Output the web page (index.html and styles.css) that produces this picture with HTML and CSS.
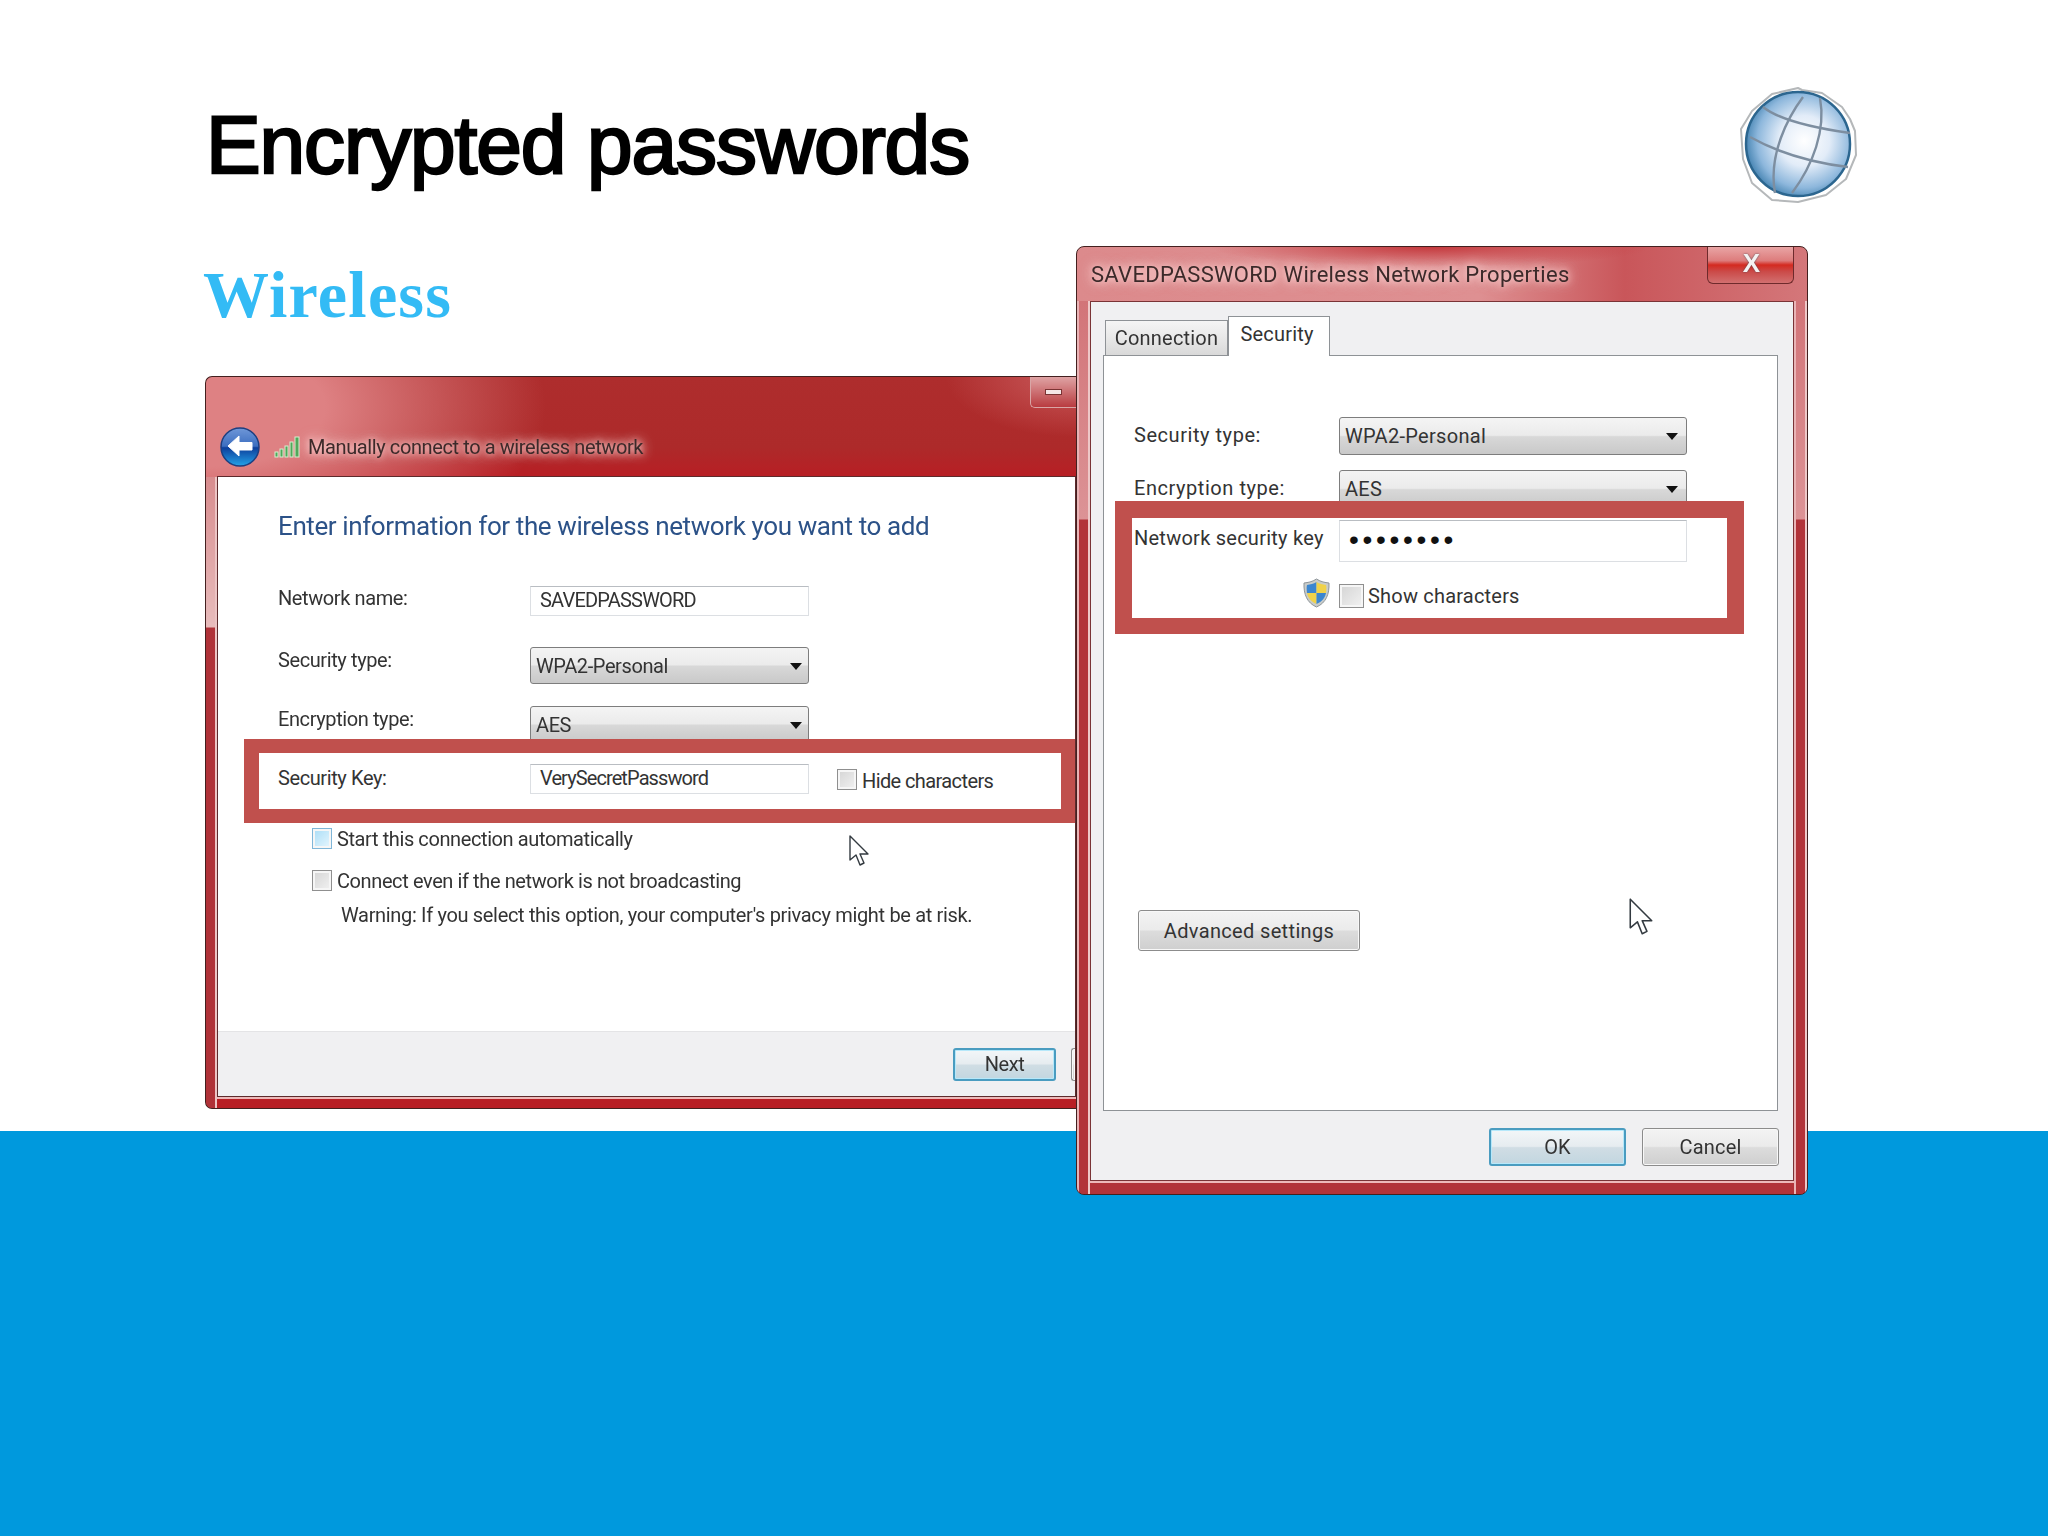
FILE: index.html

```html
<!DOCTYPE html>
<html lang="en">
<head>
    <meta charset="UTF-8">
    <title>Encrypted passwords</title>
    <link rel="stylesheet" href="styles.css">
</head>
<body>
    <div class="slide">
        <div class="slide-head">
            <h1>Encrypted passwords</h1>
            <svg class="globe" width="120" height="120" viewBox="0 0 120 120">
                <defs>
                    <radialGradient id="sphere" cx="56%" cy="47%" r="58%">
                        <stop offset="0" stop-color="#ffffff"/>
                        <stop offset="0.42" stop-color="#e2ecf8"/>
                        <stop offset="0.78" stop-color="#8db7dc"/>
                        <stop offset="1" stop-color="#3f7fae"/>
                    </radialGradient>
                </defs>
                <path d="M60 3 L64 5 L84 8 L104 22 L112 34 L117 46 L118 70 L108 94 L88 110 L60 117 L34 115 L14 98 L5 74 L3 44 L8 36 L14 26 L34 9 Z" fill="#fff" stroke="#b5b8ba" stroke-width="2" stroke-linejoin="round"/>
                <circle cx="60" cy="59" r="52" fill="url(#sphere)" stroke="#2c668f" stroke-width="2.5"/>
                <g fill="none" stroke="#7d8ea0" stroke-width="2.4">
                    <path d="M25 22 C35 30 55 40 112 48"/>
                    <path d="M12 52 C30 62 60 76 110 82"/>
                    <path d="M65 12 C50 32 30 70 37 108"/>
                    <path d="M82 13 C88 45 75 80 54 108"/>
                </g>
            </svg>
        </div>
        <h2 class="subtitle">Wireless</h2>
        <div class="band"></div>

        <div class="win win-left">
            <div class="titlebar">
                <svg class="back-icon" width="40" height="40" viewBox="0 0 40 40">
                    <defs>
                        <linearGradient id="orb" x1="0" y1="0" x2="0" y2="1">
                            <stop offset="0" stop-color="#6f97d8"/>
                            <stop offset="0.48" stop-color="#3c6ec0"/>
                            <stop offset="0.52" stop-color="#0d3f9c"/>
                            <stop offset="1" stop-color="#24a3e8"/>
                        </linearGradient>
                    </defs>
                    <circle cx="20" cy="20" r="19" fill="url(#orb)" stroke="#1d3f80" stroke-width="1.5"/>
                    <path d="M8 19 L19 9 L19 15.500 L32 15.500 L32 23 L19 23 L19 29 Z" fill="#fff" stroke="#fff" stroke-width="1" stroke-linejoin="round"/>
                </svg>
                <svg class="signal-icon" width="26" height="22" viewBox="0 0 26 22">
                    <g fill="#4fa85a" stroke="#d6f0d0" stroke-width="1">
                        <rect x="1" y="16" width="3" height="5"/>
                        <rect x="6" y="13" width="3" height="8"/>
                        <rect x="11" y="10" width="3" height="11"/>
                        <rect x="16" y="6" width="3" height="15"/>
                        <rect x="21" y="1" width="4" height="20"/>
                    </g>
                </svg>
                <span class="win-title">Manually connect to a wireless network</span>
            </div>
            <div class="min-btn"><span class="min-glyph"></span></div>
            <div class="win-body">
                <div class="wizard">
                    <h3 class="wizard-heading">Enter information for the wireless network you want to add</h3>
                    <div class="row row-name">
                        <span class="row-label">Network name:</span>
                        <span class="field field-name">SAVEDPASSWORD</span>
                    </div>
                    <div class="row row-type">
                        <span class="row-label">Security type:</span>
                        <span class="dropdown">WPA2-Personal<i class="arrow"></i></span>
                    </div>
                    <div class="row row-enc">
                        <span class="row-label">Encryption type:</span>
                        <span class="dropdown">AES<i class="arrow"></i></span>
                    </div>
                    <div class="highlight highlight-left">
                        <div class="row">
                            <span class="row-label">Security Key:</span>
                            <span class="field field-pass">VerySecretPassword</span>
                            <span class="check check-hide"></span>
                            <span class="check-label label-hide">Hide characters</span>
                        </div>
                    </div>
                    <div class="options">
                        <div class="option">
                            <span class="check check-focus"></span>
                            <span class="check-label">Start this connection automatically</span>
                        </div>
                        <div class="option">
                            <span class="check"></span>
                            <span class="check-label">Connect even if the network is not broadcasting</span>
                        </div>
                        <p class="warning">Warning: If you select this option, your computer's privacy might be at risk.</p>
                    </div>
                </div>
                <svg class="cursor cursor-left" width="20" height="31" viewBox="0 0 20 31">
                    <path d="M1 1 L1 25 L7 20 L11 30 L15 28 L11 19 L19 19 Z" fill="#fff" stroke="#333a40" stroke-width="1.4" stroke-linejoin="round"/>
                </svg>
                <div class="win-footer">
                    <span class="btn btn-default btn-next">Next</span>
                    <span class="btn btn-cut"></span>
                </div>
            </div>
        </div>

        <div class="win win-right">
            <div class="titlebar titlebar-small">
                <span class="win-title">SAVEDPASSWORD Wireless Network Properties</span>
            </div>
            <div class="close-btn">X</div>
            <div class="win-body dialog-body">
                <div class="tabs">
                    <span class="tab">Connection</span>
                    <span class="tab tab-active">Security</span>
                </div>
                <div class="panel">
                    <div class="row row-sec">
                        <span class="row-label">Security type:</span>
                        <span class="dropdown">WPA2-Personal<i class="arrow"></i></span>
                    </div>
                    <div class="row row-sec2">
                        <span class="row-label">Encryption type:</span>
                        <span class="dropdown">AES<i class="arrow"></i></span>
                    </div>
                    <div class="highlight highlight-right">
                        <div class="row">
                            <span class="row-label">Network security key</span>
                            <span class="field field-key">&#8226;&#8226;&#8226;&#8226;&#8226;&#8226;&#8226;&#8226;</span>
                        </div>
                        <div class="show-row">
                            <svg class="shield" width="27" height="30" viewBox="0 0 27 30">
                                <path d="M13.5 1 C18 4 22 4.500 26 5 C26.500 16 23 25 13.500 29 C4 25 0.500 16 1 5 C5 4.500 9 4 13.500 1 Z" fill="#c9ccc9" stroke="#8d9499"/>
                                <path d="M13.500 4 L13.500 15 L4 15 C3.500 11 3.500 9 4 7 C7.500 6.500 10.500 6 13.500 4 Z" fill="#3b86d0"/>
                                <path d="M13.500 4 C16.500 6 19.500 6.500 23 7 C23.500 9 23.500 11 23 15 L13.500 15 Z" fill="#f0d24a"/>
                                <path d="M4 15 L13.500 15 L13.500 26 C8 23.500 5 20 4 15 Z" fill="#f0d24a"/>
                                <path d="M13.500 15 L23 15 C22 20 19 23.500 13.500 26 Z" fill="#3b86d0"/>
                            </svg>
                            <span class="check check-show"></span>
                            <span class="check-label label-show">Show characters</span>
                        </div>
                    </div>
                    <span class="btn btn-advanced">Advanced settings</span>
                    <svg class="cursor cursor-right" width="24" height="37" viewBox="0 0 20 31">
                        <path d="M1 1 L1 25 L7 20 L11 30 L15 28 L11 19 L19 19 Z" fill="#fff" stroke="#333a40" stroke-width="1.3" stroke-linejoin="round"/>
                    </svg>
                </div>
                <div class="dialog-actions">
                    <span class="btn btn-default btn-ok">OK</span>
                    <span class="btn btn-cancel">Cancel</span>
                </div>
            </div>
        </div>
    </div>
</body>
</html>
```

FILE: styles.css

```css
* {
    box-sizing: border-box;
}
body {
    margin: 0;
    background-color: #fff;
}
.slide {
    position: relative;
    width: 2048px;
    height: 1536px;
    overflow: hidden;
    display: flex;
    flex-direction: column;
    background-color: #fff;
    font-family: Roboto, "Liberation Sans", sans-serif;
    font-size: 20px;
    color: #333;
}
.slide-head {
    display: flex;
    justify-content: space-between;
    align-items: flex-start;
    padding: 85px 190px 0 206px;
    height: 230px;
}
h1 {
    margin: 18px 0 0;
    font-family: "Liberation Sans", Arial, sans-serif;
    font-size: 82px;
    line-height: 84px;
    font-weight: 400;
    letter-spacing: -1.1px;
    color: #000;
    -webkit-text-stroke: 2.5px #000;
}
.globe {
    display: block;
}
.subtitle {
    margin: 30px 0 0 203px;
    font-family: "Liberation Serif", "Times New Roman", serif;
    font-size: 66px;
    line-height: 70px;
    font-weight: 700;
    letter-spacing: 1.2px;
    color: #33bbf5;
}
.band {
    margin-top: auto;
    height: 405px;
    background-color: #0099dd;
}

/* windows sit on the slide like screenshots */
.win {
    position: absolute;
    display: flex;
    flex-direction: column;
    overflow: hidden;
    border: 1px solid #43201f;
    filter: blur(0.4px);
}
.win-left {
    left: 205px;
    top: 376px;
    width: 871px;
    height: 733px;
    padding: 0 0 11px 11px;
    border-right: none;
    border-radius: 7px 0 0 7px;
    letter-spacing: -0.4px;
    background:
        radial-gradient(ellipse 340px 170px at 0 30px, #de8183 35%, rgba(222, 129, 131, 0) 100%),
        radial-gradient(ellipse 130px 60px at 100% 0, rgba(214, 110, 112, 0.7) 0, rgba(214, 110, 112, 0) 100%),
        linear-gradient(#ae2d2d 0, #ad2a2a 70px, #b81e24 100px);
}
.win-left::before {
    content: "";
    position: absolute;
    left: 0;
    top: 100px;
    bottom: 0;
    width: 11px;
    background: linear-gradient(#d88c8e 0, #e8bcbc 150px, #b03238 151px, #b03238 100%);
    box-shadow: inset -2px 0 0 #ecc4c4;
}
.win-right {
    left: 1076px;
    top: 246px;
    width: 732px;
    height: 949px;
    padding: 0 13px 13px;
    border-radius: 8px;
    letter-spacing: 0.2px;
    background:
        linear-gradient(transparent 934px, #b23339 934px),
        radial-gradient(ellipse 220px 20px at 354px 0, #c4393d 0, rgba(196, 57, 61, 0) 100%),
        linear-gradient(to right, #dc8a8c, #de9092 55%, #c9565a 75%, #d4777a);
}
.win-right::before,
.win-right::after {
    content: "";
    position: absolute;
    top: 54px;
    bottom: 0;
    width: 13px;
    background: linear-gradient(#d27478 0, #dc9396 218px, #b23339 219px, #b23339 100%);
    box-shadow: inset 2px 0 0 #e9b4b6, inset -2px 0 0 #eec8c8;
}
.win-right::before {
    left: 0;
}
.win-right::after {
    right: 0;
}
.titlebar {
    display: flex;
    align-items: center;
    height: 99px;
    padding: 41px 0 0 3px;
    flex-shrink: 0;
}
.titlebar-small {
    height: 54px;
    padding: 0 0 0 1px;
}
.back-icon {
    display: block;
}
.signal-icon {
    display: block;
    margin: 0 8px 0 14px;
}
.win-title {
    color: #3c2a2a;
    text-shadow: 0 0 6px rgba(255, 215, 215, 0.9), 0 0 12px rgba(255, 215, 215, 0.9), 0 0 16px rgba(255, 215, 215, 0.7);
}
.titlebar-small .win-title {
    font-size: 22px;
    letter-spacing: 0.3px;
}
.min-btn {
    position: absolute;
    top: 0;
    right: 0;
    width: 46px;
    height: 31px;
    display: flex;
    justify-content: center;
    align-items: center;
    border: 1px solid #d9a6a6;
    border-top: none;
    border-right: none;
    border-radius: 0 0 0 5px;
    background: linear-gradient(#dfa3a4, #b93c40);
}
.min-glyph {
    width: 17px;
    height: 6px;
    background-color: #f4e6e6;
    border: 1px solid #7a3333;
}
.close-btn {
    position: absolute;
    top: 0;
    right: 13px;
    width: 87px;
    height: 37px;
    display: flex;
    justify-content: center;
    align-items: center;
    padding: 0 0 3px 2px;
    border: 1px solid #6e2a2c;
    border-top: none;
    border-radius: 0 0 6px 6px;
    background: linear-gradient(#e9a5a5 0, #dd7c7c 38%, #d42a20 50%, #cb4a48 68%, #d27070 100%);
    font-family: "Liberation Sans", Arial, sans-serif;
    font-size: 26px;
    font-weight: 700;
    color: #f4f2f2;
    text-shadow: 0 0 2px #4a4a55;
}
.win-body {
    position: relative;
    flex: 1;
    display: flex;
    flex-direction: column;
    border: 1px solid #5d2a2c;
    background-color: #fff;
    box-shadow: 0 2px 0 #edb9b9;
}
.wizard {
    padding-left: 60px;
}
.wizard-heading {
    margin: 34px 0 0;
    font-size: 26px;
    line-height: 30px;
    font-weight: 400;
    color: #2c5288;
}
.row {
    display: flex;
    align-items: center;
}
.row-label {
    width: 252px;
    flex-shrink: 0;
    padding-bottom: 2px;
}
.row-name {
    margin-top: 45px;
}
.row-name .row-label {
    padding-bottom: 6px;
}
.row-type {
    margin-top: 31px;
}
.row-type .row-label,
.row-enc .row-label {
    padding-bottom: 12px;
}
.row-enc {
    margin-top: 22px;
}
.field {
    display: flex;
    align-items: center;
    width: 279px;
    height: 30px;
    padding-left: 9px;
    border: 1px solid #dcdfe3;
    border-top-color: #b9bdc2;
    background-color: #fff;
}
.field-name {
    padding-bottom: 2px;
    letter-spacing: -0.8px;
}
.field-pass {
    padding-bottom: 2px;
    letter-spacing: -0.9px;
}
.dropdown {
    position: relative;
    display: flex;
    align-items: center;
    width: 279px;
    height: 37px;
    padding-left: 5px;
    border: 1px solid #7d7d7d;
    border-radius: 3px;
    background: linear-gradient(#f4f4f4, #ebebeb 48%, #d8d8d8 52%, #c9c9c9);
}
.arrow {
    position: absolute;
    right: 6px;
    top: 50%;
    margin-top: -3px;
    border: 6px solid transparent;
    border-top: 7px solid #111;
    border-bottom: none;
}
.panel .arrow {
    right: 8px;
}
.highlight {
    position: relative;
    background-color: #fff;
    border-style: solid;
    border-color: #c0504d;
}
.highlight-left {
    margin: -4px 0 0 -34px;
    height: 84px;
    padding: 11px 0 0 19px;
    border-width: 14px 14px 14px 15px;
}
.check {
    display: block;
    width: 20px;
    height: 21px;
    flex-shrink: 0;
    border: 1px solid #8f8f8f;
    background: linear-gradient(135deg, #d4d4d4, #f2f2f2);
    box-shadow: inset 0 0 0 2px #f6f6f6;
}
.check-focus {
    border-color: #7fb6d8;
    background: linear-gradient(135deg, #a8dcf6, #e8f7fe);
}
.check-hide {
    margin-left: 28px;
}
.check-label {
    margin-left: 5px;
}
.label-hide {
    padding-top: 4px;
    letter-spacing: -0.6px;
}
.options {
    margin: 5px 0 0 34px;
}
.option {
    display: flex;
    align-items: center;
    height: 21px;
    margin-bottom: 21px;
}
.warning {
    margin: -8px 0 0 29px;
    line-height: 22px;
    letter-spacing: -0.33px;
}
.cursor {
    position: absolute;
    display: block;
}
.cursor-left {
    left: 631px;
    top: 358px;
}
.win-footer {
    display: flex;
    align-items: center;
    justify-content: flex-end;
    gap: 15px;
    height: 65px;
    margin-top: auto;
    border-top: 1px solid #e4e4e6;
    background-color: #f0f0f2;
}
.btn {
    display: flex;
    justify-content: center;
    align-items: center;
    border: 1px solid #8c8c8c;
    border-radius: 3px;
    background: linear-gradient(#f3f3f3, #ebebeb 48%, #dcdcdc 52%, #cfcfcf);
    box-shadow: inset 0 0 0 1px #f8f8f8;
}
.btn-default {
    border: 2px solid #4a9cc0;
    box-shadow: inset 0 0 0 1px #b6e8fa;
    background: linear-gradient(#f2f6f8, #e6ecf0 48%, #d0dde4 52%, #c2d6e0);
}
.btn-next {
    width: 103px;
    height: 33px;
}
.btn-cut {
    width: 4px;
    height: 33px;
    border-right: none;
    border-radius: 3px 0 0 3px;
}
.dialog-body {
    background-color: #f0f0f2;
    padding: 14px 15px 0 12px;
    border-color: #7a3336;
}
.tabs {
    display: flex;
    align-items: flex-end;
    padding-left: 2px;
}
.tab {
    display: flex;
    justify-content: center;
    align-items: center;
    width: 123px;
    height: 35px;
    border: 1px solid #8e9296;
    border-bottom: none;
    background: linear-gradient(#f5f5f5, #e8e8e8 50%, #d9d9d9);
}
.tab-active {
    position: relative;
    z-index: 1;
    width: 102px;
    height: 40px;
    margin-bottom: -1px;
    padding: 0 4px 5px 0;
    background: #fff;
}
.panel {
    position: relative;
    height: 756px;
    padding: 61px 0 0 30px;
    border: 1px solid #8e9296;
    background-color: #fff;
}
.panel .row-label {
    width: 205px;
    letter-spacing: 0.55px;
}
.panel .dropdown,
.panel .field {
    width: 348px;
}
.panel .dropdown {
    height: 38px;
    letter-spacing: 0.3px;
}
.row-sec2 {
    margin-top: 15px;
}
.highlight-right {
    margin: -7px 0 0 -19px;
    width: 629px;
    height: 133px;
    padding: 2px 0 0 2px;
    border-width: 17px 17px 16px 17px;
}
.highlight-right .row-label {
    padding-bottom: 6px;
    letter-spacing: 0.25px;
}
.highlight-right .field {
    height: 42px;
    padding-bottom: 2px;
}
.field-key {
    font-family: "Liberation Sans", Arial, sans-serif;
    font-size: 28px;
    letter-spacing: 3.7px;
    color: #111;
}
.show-row {
    display: flex;
    align-items: center;
    margin: 16px 0 0 169px;
}
.shield {
    display: block;
}
.check-show {
    width: 25px;
    height: 24px;
    margin: 6px 0 0 9px;
}
.label-show {
    margin-left: 4px;
    padding-top: 6px;
}
.btn-advanced {
    width: 222px;
    height: 41px;
    margin: 276px 0 0 4px;
    letter-spacing: 0.35px;
}
.cursor-right {
    left: 525px;
    top: 542px;
}
.dialog-actions {
    display: flex;
    justify-content: flex-end;
    gap: 16px;
    margin: 17px -1px 0 0;
}
.btn-ok {
    width: 137px;
    height: 38px;
}
.btn-cancel {
    width: 137px;
    height: 38px;
}
```
